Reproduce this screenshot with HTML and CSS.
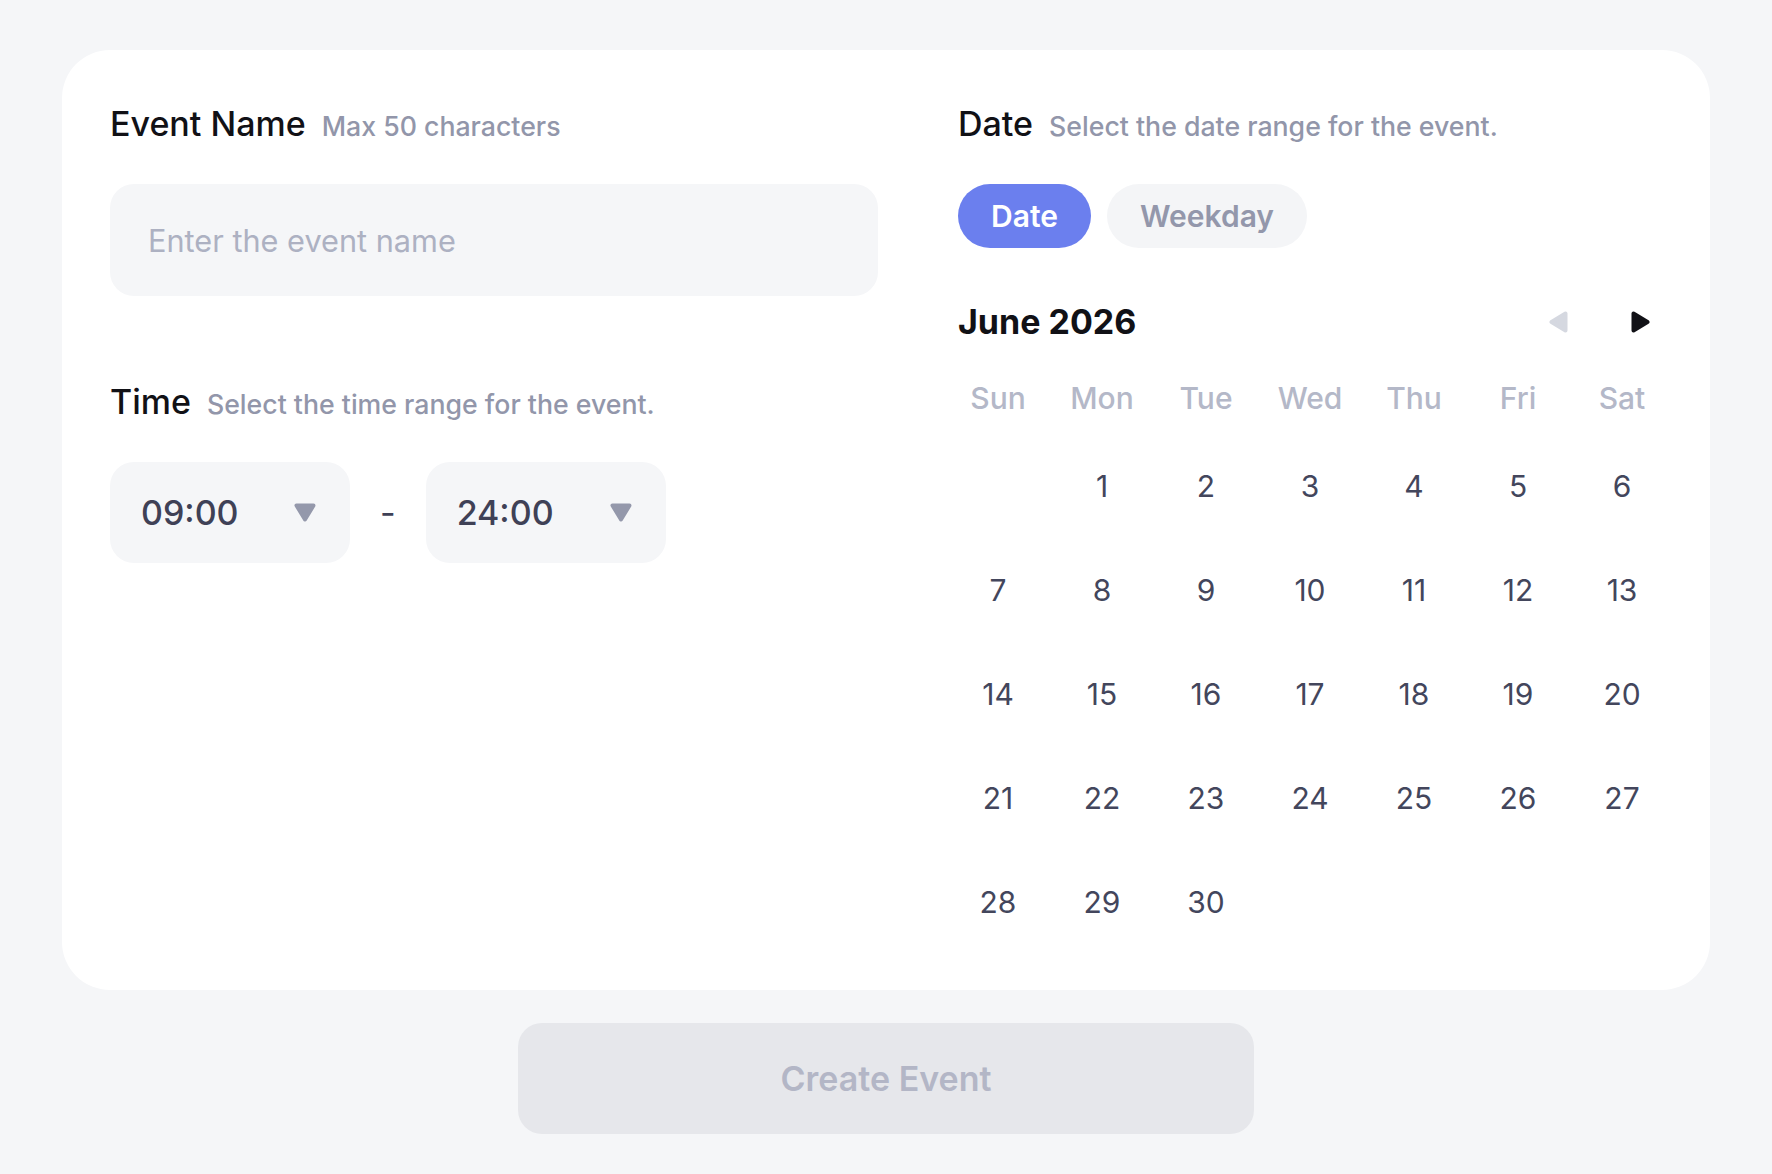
FILE: index.html
```html
<!DOCTYPE html>
<html lang="en">
<head>
  <meta charset="UTF-8" />
  <meta name="viewport" content="width=device-width, initial-scale=1.0"/>
  <title>Create Event</title>
  <link rel="stylesheet" href="styles.css">
</head>
<body>
  <main class="page">
    <section class="card">
      <div class="col">
        <div class="field-head">
          <h3>Event Name</h3>
          <span class="hint">Max 50 characters</span>
        </div>
        <input class="text-input" type="text" maxlength="50" placeholder="Enter the event name" />

        <div class="field-head time-head">
          <h3>Time</h3>
          <span class="hint">Select the time range for the event.</span>
        </div>
        <div class="time-row">
          <button class="time-select">
            <span>09:00</span>
            <svg class="caret" width="22" height="19" viewBox="0 0 22 19"><path d="M2.5 2.5 L19.5 2.5 L11 16.5 Z"/></svg>
          </button>
          <span class="dash">-</span>
          <button class="time-select">
            <span>24:00</span>
            <svg class="caret" width="22" height="19" viewBox="0 0 22 19"><path d="M2.5 2.5 L19.5 2.5 L11 16.5 Z"/></svg>
          </button>
        </div>
      </div>

      <div class="col">
        <div class="field-head">
          <h3>Date</h3>
          <span class="hint">Select the date range for the event.</span>
        </div>
        <div class="mode-toggle">
          <button class="mode active">Date</button>
          <button class="mode">Weekday</button>
        </div>

        <div class="cal-head">
          <h4>June 2026</h4>
          <div class="cal-nav">
            <button class="nav-btn prev" aria-label="Previous month">
              <svg width="19" height="22" viewBox="0 0 19 22"><path d="M16.5 2.5 L16.5 19.5 L2.5 11 Z"/></svg>
            </button>
            <button class="nav-btn next" aria-label="Next month">
              <svg width="19" height="22" viewBox="0 0 19 22"><path d="M2.5 2.5 L2.5 19.5 L16.5 11 Z"/></svg>
            </button>
          </div>
        </div>

        <div class="cal-grid">
          <div class="wk">Sun</div>
          <div class="wk">Mon</div>
          <div class="wk">Tue</div>
          <div class="wk">Wed</div>
          <div class="wk">Thu</div>
          <div class="wk">Fri</div>
          <div class="wk">Sat</div>

          <div class="day"></div>
          <div class="day">1</div>
          <div class="day">2</div>
          <div class="day">3</div>
          <div class="day">4</div>
          <div class="day">5</div>
          <div class="day">6</div>
          <div class="day">7</div>
          <div class="day">8</div>
          <div class="day">9</div>
          <div class="day">10</div>
          <div class="day">11</div>
          <div class="day">12</div>
          <div class="day">13</div>
          <div class="day">14</div>
          <div class="day">15</div>
          <div class="day">16</div>
          <div class="day">17</div>
          <div class="day">18</div>
          <div class="day">19</div>
          <div class="day">20</div>
          <div class="day">21</div>
          <div class="day">22</div>
          <div class="day">23</div>
          <div class="day">24</div>
          <div class="day">25</div>
          <div class="day">26</div>
          <div class="day">27</div>
          <div class="day">28</div>
          <div class="day">29</div>
          <div class="day">30</div>
        </div>
      </div>
    </section>

    <button class="submit" disabled>Create Event</button>
  </main>
</body>
</html>
```

FILE: styles.css
```css
body {
  margin: 0;
  background: #f5f6f8;
  font-family: "Inter", "Noto Sans", sans-serif;
}
button {
  font-family: inherit;
  border: 0;
  cursor: pointer;
}
.page {
  display: flex;
  flex-direction: column;
  align-items: center;
  padding: 50px 62px 40px;
}
.card {
  align-self: stretch;
  display: grid;
  grid-template-columns: 1fr 704px;
  column-gap: 80px;
  padding: 48px;
  background: #fff;
  border-radius: 48px;
}
.field-head {
  display: flex;
  align-items: baseline;
  gap: 16px;
  height: 52px;
  line-height: 52px;
  margin-bottom: 34px;
}
.field-head h3 {
  margin: 0;
  font-size: 34px;
  font-weight: 500;
  color: #111116;
}
.hint {
  font-size: 26.7px;
  font-weight: 500;
  color: #9296aa;
}
.time-head {
  margin-top: 80px;
}
.text-input {
  display: block;
  box-sizing: border-box;
  width: 100%;
  height: 112px;
  padding: 0 38px;
  border: 0;
  border-radius: 24px;
  background: #f5f6f8;
  font-family: inherit;
  font-size: 30.7px;
  color: #3f4156;
  outline: none;
}
.text-input::placeholder {
  color: #adb1c2;
}
.time-row {
  display: flex;
  align-items: center;
  gap: 30px;
}
.time-select {
  display: flex;
  align-items: center;
  justify-content: space-between;
  box-sizing: border-box;
  width: 240px;
  height: 101px;
  padding: 0 34px 0 31px;
  border-radius: 24px;
  background: #f5f6f8;
  font-size: 34px;
  font-weight: 500;
  color: #3f4156;
}
.caret path {
  fill: #9498ab;
  stroke: #9498ab;
  stroke-width: 4;
  stroke-linejoin: round;
}
.dash {
  font-size: 34px;
  color: #3f4156;
}
.mode-toggle {
  display: flex;
  gap: 16px;
  margin-bottom: 52px;
}
.mode {
  height: 64px;
  padding: 0 33px;
  border-radius: 32px;
  background: #f4f5f7;
  font-size: 30px;
  font-weight: 600;
  color: #9397ab;
}
.mode.active {
  background: #6b7fee;
  color: #fff;
}
.cal-head {
  display: flex;
  align-items: center;
  justify-content: space-between;
  height: 44px;
  margin-bottom: 30px;
}
.cal-head h4 {
  margin: 0;
  font-size: 34px;
  line-height: 44px;
  font-weight: 700;
  color: #111116;
}
.cal-nav {
  display: flex;
  gap: 38px;
}
.nav-btn {
  display: flex;
  align-items: center;
  justify-content: center;
  width: 44px;
  height: 44px;
  padding: 0;
  background: none;
}
.nav-btn path {
  stroke-width: 4;
  stroke-linejoin: round;
}
.prev path {
  fill: #d5d8e0;
  stroke: #d5d8e0;
}
.next path {
  fill: #111116;
  stroke: #111116;
}
.cal-grid {
  display: grid;
  grid-template-columns: repeat(7, 80px);
  grid-template-rows: 48px;
  grid-auto-rows: 80px;
  gap: 24px;
}
.wk,
.day {
  display: flex;
  align-items: center;
  justify-content: center;
  font-size: 30px;
}
.wk {
  font-weight: 500;
  color: #b4b8c8;
}
.day {
  color: #43465c;
}
.submit {
  width: 736px;
  height: 111px;
  margin-top: 33px;
  border-radius: 24px;
  background: #e6e7eb;
  font-size: 34px;
  font-weight: 600;
  color: #b3b6c6;
  cursor: default;
}
```
